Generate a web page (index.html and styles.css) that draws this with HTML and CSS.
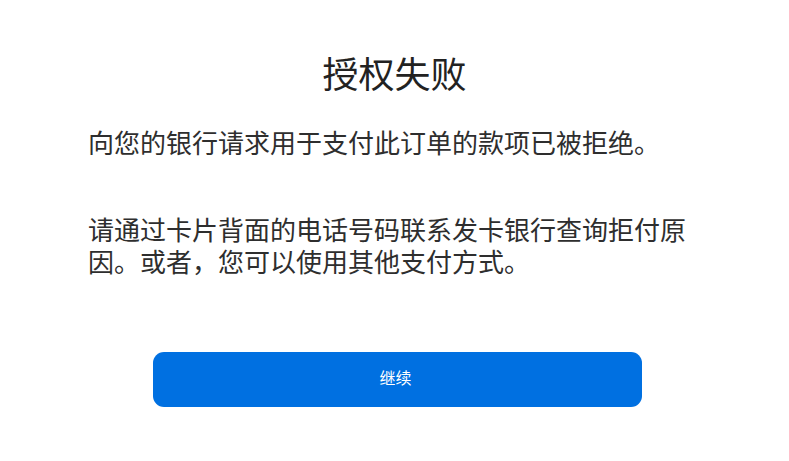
FILE: index.html
```html
<!DOCTYPE html>
<html lang="zh-CN">
<head>
<meta charset="utf-8">
<link rel="stylesheet" href="styles.css">
</head>
<body>
<main class="page">
  <h1 class="title">授权失败</h1>
  <p class="msg msg-first">向您的银行请求用于支付此订单的款项已被拒绝。</p>
  <p class="msg msg-second">请通过卡片背面的电话号码联系发卡银行查询拒付原因。或者，您可以使用其他支付方式。</p>
  <div class="actions">
    <button class="btn" type="button">继续</button>
  </div>
</main>
</body>
</html>
```
FILE: styles.css
```css
html, body {
  margin: 0;
  padding: 0;
  background: #ffffff;
}
body {
  font-family: "Noto Sans CJK SC", "Noto Sans", sans-serif;
  color: #2b2b2b;
}
.page {
  display: flex;
  flex-direction: column;
  padding: 50px 0 0 88px;
  width: 613px;
}
.title {
  margin: 0;
  font-size: 36px;
  line-height: 44px;
  font-weight: 400;
  text-align: center;
  color: #222222;
  width: 613px;
  margin-left: -88px;
  padding-left: 88px;
  box-sizing: content-box;
}
.msg {
  margin: 0;
  font-size: 26px;
  line-height: 32px;
  font-weight: 400;
  color: #2e2e2e;
}
.msg-first {
  margin-top: 32px;
}
.msg-second {
  margin-top: 55px;
}
.actions {
  margin-top: 75px;
  padding-left: 65px;
}
.btn {
  display: block;
  width: 489px;
  height: 55px;
  border: none;
  border-radius: 11px;
  background: #0070e1;
  color: #ffffff;
  font-family: "Noto Sans CJK SC", "Noto Sans", sans-serif;
  font-size: 16px;
  padding: 0 0 5px 0;
  text-indent: -4px;
}
```
